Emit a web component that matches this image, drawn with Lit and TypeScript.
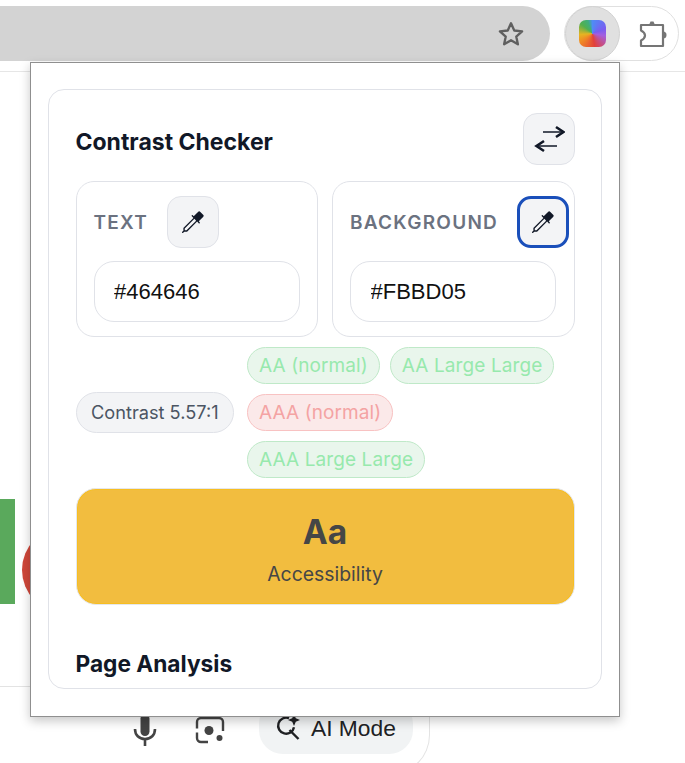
import { LitElement, html, css } from "lit";
import { customElement } from "lit/decorators.js";

const dropper = html`<svg class="ico-drop" viewBox="0 0 16 16" fill="currentColor"><path d="M13.354.646a1.207 1.207 0 0 0-1.708 0L8.5 3.793l-.646-.647a.5.5 0 1 0-.708.708L8.293 5l-7.147 7.146A.5.5 0 0 0 1 12.5v1.793l-.854.853a.5.5 0 1 0 .708.707L1.707 15H3.5a.5.5 0 0 0 .354-.146L11 7.707l1.146 1.147a.5.5 0 0 0 .708-.708l-.647-.646 3.147-3.146a1.207 1.207 0 0 0 0-1.708l-2-2zM2 12.707l7-7L10.293 7l-7 7H2v-1.293z"/></svg>`;

@customElement("app-root")
export class AppRoot extends LitElement {
  static styles = css`
    :host { display: block; position: relative; width: 685px; height: 763px; overflow: hidden; background: #fff; font-family: Inter, "Liberation Sans", sans-serif; color: #111827; }
    .toolbar { display: flex; height: 72px; box-sizing: border-box; border-bottom: 1px solid #e6e6e6; padding-top: 6px; align-items: flex-start; }
    .omni { width: 550px; height: 55px; background: #d3d3d3; border-radius: 0 28px 28px 0; display: flex; align-items: center; justify-content: flex-end; padding-right: 25px; box-sizing: border-box; flex: none; }
    .star { width: 28px; height: 28px; color: #5f5f5f; }
    .ext { margin-left: 14px; width: 115px; height: 55px; box-sizing: border-box; border: 1px solid #e0e0e0; border-radius: 28px; display: flex; align-items: center; background: #fff; }
    .ext-active { width: 55px; height: 55px; margin-left: 0; border-radius: 50%; background: #e0e0e0; border: 1px solid #d2d2d2; box-sizing: border-box; display: flex; align-items: center; justify-content: center; flex: none; }
    .logo { width: 27px; height: 27px; border-radius: 7px; background: conic-gradient(from 0deg, #4f8cf5 0deg, #7a5cf0 70deg, #a35fe0 100deg, #e2403a 170deg, #f08a24 235deg, #e6b422 265deg, #52b04f 310deg, #3fae7c 340deg, #4f8cf5 360deg); }
    .puzzle { width: 32px; height: 32px; margin-left: 17px; color: #757575; }

    .page-bit { position: absolute; }
    .green { left: 0; top: 499px; width: 15px; height: 105px; background: #5aa95c; }
    .red { left: 22px; top: 527px; width: 86px; height: 86px; border-radius: 50%; background: #d0473a; }
    .rule { left: 0; top: 686px; width: 60px; height: 1px; background: #e3e3e3; }
    .search-edge { left: 200px; top: 650px; width: 230px; height: 125px; box-sizing: border-box; border-style: solid; border-color: #e3e3e3; border-width: 0 1px 1px 0; border-bottom-right-radius: 40px; background: #fff; }
    .mic { left: 132px; top: 714px; width: 26px; height: 32px; color: #444; }
    .lens { left: 194px; top: 714px; width: 32px; height: 32px; color: #444; }
    .ai { left: 259px; top: 700px; width: 154px; height: 54px; border-radius: 24px; background: #f1f3f4; display: flex; align-items: flex-end; box-sizing: border-box; padding: 0 0 12px 15px; gap: 7px; font: 22.8px/28px "Liberation Sans", Arial, sans-serif; color: #202124; }
    .ai svg { width: 30px; height: 30px; color: #202124; margin-bottom: 0; }

    .popup { position: absolute; left: 30px; top: 62px; width: 590px; height: 655px; box-sizing: border-box; background: #fff; border: 1px solid #8f8f8f; box-shadow: 0 4px 10px rgba(0,0,0,.22); padding: 26px 17px; }
    .card { height: 600px; box-sizing: border-box; border: 1px solid #e0e2e8; border-radius: 16px; padding: 23px 26.5px 0; overflow: hidden; background: #fff; }
    .head { display: flex; justify-content: space-between; align-items: center; height: 52px; margin-right: -0.5px; }
    h2 { margin: 6px 0 0; font-size: 23px; line-height: 28px; font-weight: 700; color: #111827; }
    .btn { width: 52px; height: 52px; box-sizing: border-box; border: 1px solid #e0e2e8; border-radius: 14px; background: #f3f4f6; color: #111827; display: flex; align-items: center; justify-content: center; padding: 0; flex: none; }
    .btn.focus { border: 3px solid #1a4fba; border-radius: 14px; }
    .swap { width: 32px; height: 32px; }
    .ico-drop { width: 22px; height: 22px; }
    .fields { display: grid; grid-template-columns: minmax(0, 1fr) minmax(0, 1fr); gap: 14px; margin-top: 16px; }
    .field { height: 156px; box-sizing: border-box; border: 1px solid #e0e2e8; border-radius: 18px; padding: 14px 17px 0; }
    .field-top { display: flex; align-items: center; gap: 19px; }
    .label { font-size: 19px; font-weight: 600; letter-spacing: 1.25px; color: #6b7280; line-height: 24px; margin-top: 1px; }
    input { display: block; box-sizing: border-box; width: 206px; height: 61px; margin-top: 13px; border: 1px solid #e0e2e8; border-radius: 20px; padding: 0 19.5px; font: 22px "Liberation Sans", Arial, sans-serif; color: #111; background: #fff; outline: none; }
    .status { display: flex; align-items: center; gap: 13px; height: 131px; margin-top: 10px; }
    .contrast { height: 41px; box-sizing: border-box; padding: 0 14.5px 2px; display: flex; align-items: center; border: 1px solid #e0e2e8; border-radius: 21px; background: #f3f4f6; color: #4b5563; font-size: 18.2px; white-space: nowrap; }
    .tags { display: flex; flex-wrap: wrap; gap: 10px; width: 327px; }
    .tag { height: 37px; box-sizing: border-box; padding: 0 11px; display: flex; align-items: center; border-radius: 19px; font-size: 19px; white-space: nowrap; border: 1px solid; letter-spacing: .1px; }
    .ok { color: #97e9ad; background: #e9f6ec; border-color: #bfe9c8; }
    .bad { color: #f4a3a3; background: #fbe9e9; border-color: #f8c2c2; }
    .preview { height: 117px; margin-top: 10px; box-sizing: border-box; border: 1px solid #e5e7eb; box-shadow: inset 0 0 0 1px #f7be22; border-radius: 20px; background: #f2bd3f; color: #464646; display: flex; flex-direction: column; align-items: center; }
    .aa { font-size: 33.5px; font-weight: 700; line-height: 40px; margin-top: 23px; }
    .sample { font-size: 19.4px; line-height: 24px; margin-top: 10px; }
    h3 { margin: 45px 0 0; font-size: 22.7px; line-height: 28px; font-weight: 700; color: #111827; }
  `;

  render() {
    return html`
      <div class="toolbar">
        <div class="omni">
          <svg class="star" viewBox="0 0 24 24" fill="none" stroke="currentColor" stroke-width="2" stroke-linejoin="round"><path d="M12 2.800l2.800 6.200 6.700.7-5 4.500 1.400 6.600L12 17.400l-5.900 3.400 1.400-6.600-5-4.500 6.700-.7z"/></svg>
        </div>
        <div class="ext">
          <div class="ext-active"><div class="logo"></div></div>
          <svg class="puzzle" viewBox="0 0 32 32" fill="none" stroke="currentColor" stroke-width="2.200" stroke-linejoin="round">
            <path d="M4 7H26V28H4V22.500Q8 20.500 8 17.500Q8 14.500 4 12.500Z"/>
            <path d="M12 7l1.500-3.500h3L18 7z" fill="currentColor" stroke="none"/>
            <path d="M26 13.500a3.500 3.500 0 0 1 0 7z" fill="currentColor" stroke="none"/>
          </svg>
        </div>
      </div>

      <div class="page-bit green"></div>
      <div class="page-bit red"></div>
      <div class="page-bit rule"></div>
      <div class="page-bit search-edge"></div>
      <svg class="page-bit mic" viewBox="0 0 26 32"><rect x="8.500" y="0" width="9" height="22" rx="4.500" fill="currentColor"/><path d="M3 15c0 6 4 10 10 10s10-4 10-10" fill="none" stroke="currentColor" stroke-width="2.600"/><path d="M13 24v8" stroke="currentColor" stroke-width="2.600"/></svg>
      <svg class="page-bit lens" viewBox="0 0 32 32" fill="none" stroke="currentColor" stroke-width="2.400">
        <path d="M3 14.500V8a4 4 0 0 1 4-4h18a4 4 0 0 1 4 4v9"/>
        <path d="M3 18.500V24a4 4 0 0 0 4 4h7"/>
        <circle cx="15" cy="16.500" r="4.500" fill="currentColor" stroke="none"/>
        <circle cx="25.500" cy="24" r="3" fill="currentColor" stroke="none"/>
      </svg>
      <div class="page-bit ai">
        <svg viewBox="0 0 30 30" fill="none" stroke="currentColor" stroke-width="2.400"><path d="M15 6.200a8 8 0 1 0 5 9"/><path d="M15.500 18l9 9"/><path d="M20 2l1.800 4.200L26 8l-4.200 1.800L20 14l-1.800-4.200L14 8l4.200-1.800z" fill="currentColor" stroke="none"/></svg>
        <span>AI Mode</span>
      </div>

      <div class="popup">
        <div class="card">
          <div class="head">
            <h2>Contrast Checker</h2>
            <button class="btn" aria-label="Swap">
              <svg class="swap" viewBox="0 0 32 32" fill="none" stroke="currentColor">
                <path d="M10 9H30" stroke-width="1.600"/>
                <path d="M23 4l7.500 5-7.500 5" stroke-width="2.600"/>
                <path d="M24 23H4" stroke-width="1.600"/>
                <path d="M11 18l-7.500 5 7.500 5" stroke-width="2.600"/>
              </svg>
            </button>
          </div>
          <div class="fields">
            <div class="field">
              <div class="field-top"><span class="label">TEXT</span><button class="btn" aria-label="Pick text colour">${dropper}</button></div>
              <input value="#464646" />
            </div>
            <div class="field">
              <div class="field-top"><span class="label">BACKGROUND</span><button class="btn focus" aria-label="Pick background colour">${dropper}</button></div>
              <input value="#FBBD05" />
            </div>
          </div>
          <div class="status">
            <div class="contrast">Contrast 5.57:1</div>
            <div class="tags">
              <span class="tag ok">AA (normal)</span>
              <span class="tag ok">AA Large Large</span>
              <span class="tag bad">AAA (normal)</span>
              <span class="tag ok">AAA Large Large</span>
            </div>
          </div>
          <div class="preview">
            <div class="aa">Aa</div>
            <div class="sample">Accessibility</div>
          </div>
          <h3>Page Analysis</h3>
        </div>
      </div>
    `;
  }
}
